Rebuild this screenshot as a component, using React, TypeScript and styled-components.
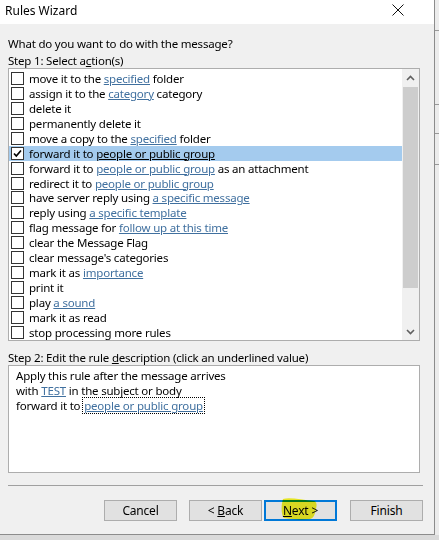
import React from "react";
import styled, { createGlobalStyle } from "styled-components";

const Global = createGlobalStyle`
  html, body { margin: 0; padding: 0; }
  body {
    background: #d9d9d9;
    font-family: "Noto Sans", "Open Sans", sans-serif;
    font-size: 11.5px;
    letter-spacing: -0.2px;
    color: #000;
    width: 439px;
    height: 540px;
    overflow: hidden;
  }
`;

const Screen = styled.div`
  display: flex;
  width: 439px;
  height: 540px;
  background: linear-gradient(#f0f0f0, #f0f0f0) top / 100% 535px no-repeat, #dadada;
`;

const Window = styled.div`
  width: 434px;
  height: 534px;
  border-right: 1px solid #8c8c8c;
  border-bottom: 1px solid #8c8c8c;
  background: #f0f0f0;
  display: flex;
  flex-direction: column;
  flex: none;
`;

const Behind = styled.div`
  flex: 1;
  height: 535px;
  background: #ececec;
  display: flex;
  flex-direction: column;
`;

const BehindBand = styled.div<{ $h: number }>`
  height: ${(p) => p.$h}px;
  border-bottom: 1px solid #9a9a9a;
  flex: none;
`;

const TitleBar = styled.div`
  height: 24px;
  background: #fff;
  display: flex;
  align-items: center;
  justify-content: space-between;
  padding: 0 0 0 5px;
  flex: none;
`;

const Title = styled.span`
  font-size: 12px;
  letter-spacing: 0;
  line-height: 16px;
  margin-top: -3px;
`;

const Close = styled.div`
  width: 44px;
  height: 24px;
  display: flex;
  align-items: center;
  justify-content: center;
  margin-right: 14px;
  margin-top: -4px;
`;

const Body = styled.div`
  padding: 12px 0 0 8px;
  display: flex;
  flex-direction: column;
`;

const Label = styled.div<{ $mt?: number }>`
  line-height: 15px;
  height: 15px;
  margin-top: ${(p) => p.$mt ?? 0}px;
  white-space: nowrap;
`;

const U = styled.span`
  text-decoration: underline;
  text-underline-offset: 1px;
`;

const Box = styled.div<{ $h: number }>`
  width: 410px;
  height: ${(p) => p.$h}px;
  border: 1px solid #adadad;
  background: #fff;
  display: flex;
  flex: none;
`;

const Rows = styled.div`
  flex: 1;
  padding-top: 2px;
  display: flex;
  flex-direction: column;
`;

const Row = styled.div<{ $sel?: boolean }>`
  height: 15px;
  display: flex;
  align-items: center;
  gap: 5px;
  padding-left: 2px;
  background: ${(p) => (p.$sel ? "#a4cbee" : "transparent")};
  white-space: nowrap;
  overflow: hidden;
  line-height: 15px;
`;

const Check = styled.span`
  width: 11px;
  height: 11px;
  border: 1px solid #333;
  background: #fff;
  flex: none;
  display: flex;
  align-items: center;
  justify-content: center;
`;

const Link = styled.span<{ $dark?: boolean }>`
  color: ${(p) => (p.$dark ? "#000" : "#40709f")};
  text-decoration: underline;
  text-underline-offset: 1px;
`;

const Scroll = styled.div`
  width: 17px;
  background: #f0f0f0;
  display: flex;
  flex-direction: column;
  flex: none;
`;

const Arrow = styled.div`
  height: 17px;
  display: flex;
  align-items: center;
  justify-content: center;
  flex: none;
`;

const Thumb = styled.div`
  height: 201px;
  background: #cdcdcd;
  margin: 1px 1px 0;
  flex: none;
`;

const Spacer = styled.div`
  flex: 1;
`;

const Desc = styled.div`
  padding: 2px 0 0 7px;
  display: flex;
  flex-direction: column;
`;

const DescLine = styled.div`
  height: 15px;
  line-height: 15px;
  white-space: nowrap;
`;

const Focus = styled.span`
  outline: 1px dotted #000;
  outline-offset: 0;
  padding: 0 1px;
`;

const Separator = styled.div`
  width: 415px;
  height: 0;
  border-top: 1px solid #a0a0a0;
  margin-top: 12px;
`;

const Buttons = styled.div`
  display: flex;
  justify-content: flex-end;
  width: 415px;
  margin-top: 14px;
`;

const Button = styled.div<{ $primary?: boolean; $ml: number }>`
  position: relative;
  width: 73px;
  height: 21px;
  box-sizing: border-box;
  margin-left: ${(p) => p.$ml}px;
  background: #e1e1e1;
  border: ${(p) => (p.$primary ? "2px solid #0078d7" : "1px solid #adadad")};
  display: flex;
  align-items: center;
  justify-content: center;
  font-size: 12px;
  white-space: pre;
`;

const Highlight = styled.svg`
  position: absolute;
  left: 14px;
  top: -5px;
  mix-blend-mode: multiply;
  pointer-events: none;
`;

const CheckMark = () => (
  <svg width="9" height="9" viewBox="0 0 9 9">
    <path d="M1 4.5 L3.3 7 L8 1.5" stroke="#000" strokeWidth="1.7" fill="none" />
  </svg>
);

const Chevron = ({ up }: { up?: boolean }) => (
  <svg width="9" height="6" viewBox="0 0 9 6">
    <path d={up ? "M1 5 L4.5 1.5 L8 5" : "M1 1 L4.5 4.5 L8 1"} stroke="#606060" strokeWidth="1.6" fill="none" />
  </svg>
);

type Part = string | { link: string };
const rows: Part[][] = [
  ["move it to the ", { link: "specified" }, " folder"],
  ["assign it to the ", { link: "category" }, " category"],
  ["delete it"],
  ["permanently delete it"],
  ["move a copy to the ", { link: "specified" }, " folder"],
  ["forward it to ", { link: "people or public group" }],
  ["forward it to ", { link: "people or public group" }, " as an attachment"],
  ["redirect it to ", { link: "people or public group" }],
  ["have server reply using ", { link: "a specific message" }],
  ["reply using ", { link: "a specific template" }],
  ["flag message for ", { link: "follow up at this time" }],
  ["clear the Message Flag"],
  ["clear message's categories"],
  ["mark it as ", { link: "importance" }],
  ["print it"],
  ["play ", { link: "a sound" }],
  ["mark it as read"],
  ["stop processing more rules"],
];

export default function App() {
  return (
    <>
      <Global />
      <Screen>
        <Window>
          <TitleBar>
            <Title>Rules Wizard</Title>
            <Close>
              <svg width="12" height="12" viewBox="0 0 12 12">
                <path d="M0.5 0.5 L11.5 11.5 M11.5 0.5 L0.5 11.5" stroke="#111" strokeWidth="1" />
              </svg>
            </Close>
          </TitleBar>
          <Body>
            <Label>What do you want to do with the message?</Label>
            <Label $mt={2}>
              Step 1: Select a<U>c</U>tion(s)
            </Label>
            <Box $h={271}>
              <Rows>
                {rows.map((parts, i) => {
                  const sel = i === 5;
                  return (
                    <Row key={i} $sel={sel}>
                      <Check>{sel && <CheckMark />}</Check>
                      <span>
                        {parts.map((p, j) =>
                          typeof p === "string" ? (
                            <React.Fragment key={j}>{p}</React.Fragment>
                          ) : (
                            <Link key={j} $dark={sel}>
                              {p.link}
                            </Link>
                          )
                        )}
                      </span>
                    </Row>
                  );
                })}
              </Rows>
              <Scroll>
                <Arrow>
                  <Chevron up />
                </Arrow>
                <Thumb />
                <Spacer />
                <Arrow>
                  <Chevron />
                </Arrow>
              </Scroll>
            </Box>
            <Label $mt={9}>
              Step 2: Edit the rule <U>d</U>escription (click an underlined value)
            </Label>
            <Box $h={106}>
              <Desc>
                <DescLine>Apply this rule after the message arrives</DescLine>
                <DescLine>
                  with <Link>TEST</Link> in the subject or body
                </DescLine>
                <DescLine>
                  {"forward it to "}
                  <Focus>
                    <Link>people or public group</Link>
                  </Focus>
                </DescLine>
              </Desc>
            </Box>
            <Separator />
            <Buttons>
              <Button $ml={0}>Cancel</Button>
              <Button $ml={12}>
                {"< "}
                <U>B</U>
                {"ack"}
              </Button>
              <Button $ml={2} $primary>
                <U>N</U>
                {"ext >"}
                <Highlight width="40" height="26" viewBox="0 0 40 26">
                  <path
                    d="M3 2 C10 0 22 3 34 4 C37 5 37 8 36 12 C35 17 34 21 30 22 C20 23 10 22 4 21 C1 18 1 8 3 2 Z"
                    fill="#f2f200"
                    opacity="0.85"
                  />
                </Highlight>
              </Button>
              <Button $ml={13}>Finish</Button>
            </Buttons>
          </Body>
        </Window>
        <Behind>
          <BehindBand $h={30} />
          <BehindBand $h={73} />
          <BehindBand $h={28} />
          <BehindBand $h={30} />
        </Behind>
      </Screen>
    </>
  );
}
